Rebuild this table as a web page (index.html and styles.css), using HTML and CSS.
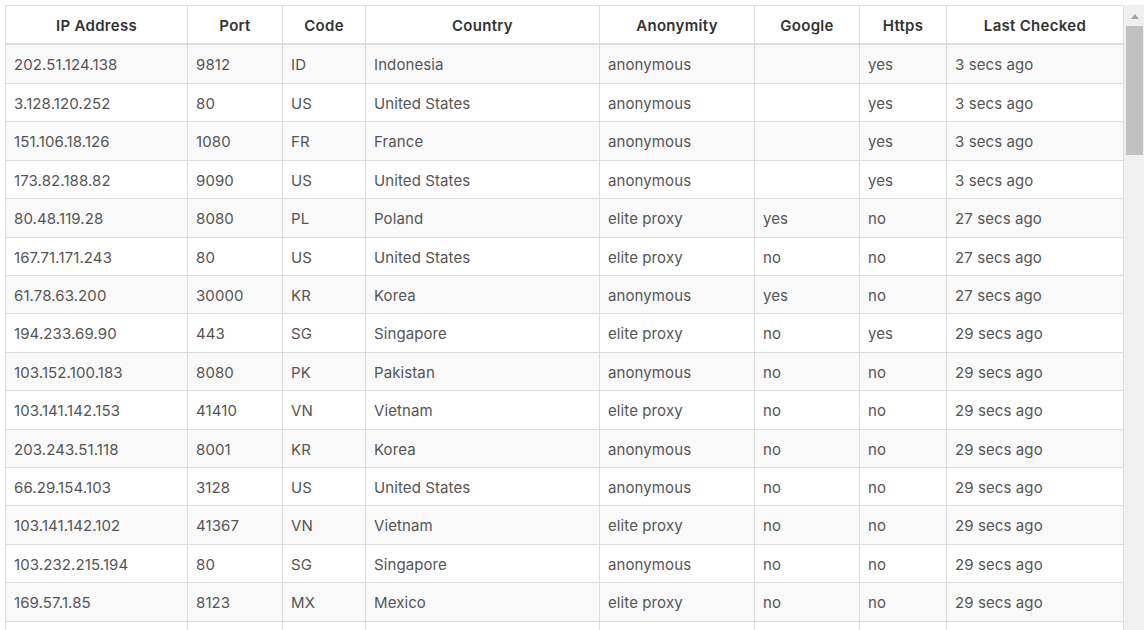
FILE: index.html
```html
<!DOCTYPE html>
<html lang="en">
<head>
<meta charset="utf-8">
<title>Proxy List</title>
<link rel="stylesheet" href="styles.css">
</head>
<body>
<div class="panel">
  <div class="viewport">
    <table class="proxies">
      <colgroup>
        <col class="c-ip"><col class="c-port"><col class="c-code"><col class="c-country">
        <col class="c-anon"><col class="c-google"><col class="c-https"><col class="c-last">
      </colgroup>
      <thead>
        <tr><th>IP Address</th><th>Port</th><th>Code</th><th>Country</th><th>Anonymity</th><th>Google</th><th>Https</th><th>Last Checked</th></tr>
      </thead>
      <tbody>
        <tr><td>202.51.124.138</td><td>9812</td><td>ID</td><td>Indonesia</td><td>anonymous</td><td></td><td>yes</td><td>3 secs ago</td></tr>
        <tr><td>3.128.120.252</td><td>80</td><td>US</td><td>United States</td><td>anonymous</td><td></td><td>yes</td><td>3 secs ago</td></tr>
        <tr><td>151.106.18.126</td><td>1080</td><td>FR</td><td>France</td><td>anonymous</td><td></td><td>yes</td><td>3 secs ago</td></tr>
        <tr><td>173.82.188.82</td><td>9090</td><td>US</td><td>United States</td><td>anonymous</td><td></td><td>yes</td><td>3 secs ago</td></tr>
        <tr><td>80.48.119.28</td><td>8080</td><td>PL</td><td>Poland</td><td>elite proxy</td><td>yes</td><td>no</td><td>27 secs ago</td></tr>
        <tr><td>167.71.171.243</td><td>80</td><td>US</td><td>United States</td><td>elite proxy</td><td>no</td><td>no</td><td>27 secs ago</td></tr>
        <tr><td>61.78.63.200</td><td>30000</td><td>KR</td><td>Korea</td><td>anonymous</td><td>yes</td><td>no</td><td>27 secs ago</td></tr>
        <tr><td>194.233.69.90</td><td>443</td><td>SG</td><td>Singapore</td><td>elite proxy</td><td>no</td><td>yes</td><td>29 secs ago</td></tr>
        <tr><td>103.152.100.183</td><td>8080</td><td>PK</td><td>Pakistan</td><td>anonymous</td><td>no</td><td>no</td><td>29 secs ago</td></tr>
        <tr><td>103.141.142.153</td><td>41410</td><td>VN</td><td>Vietnam</td><td>elite proxy</td><td>no</td><td>no</td><td>29 secs ago</td></tr>
        <tr><td>203.243.51.118</td><td>8001</td><td>KR</td><td>Korea</td><td>anonymous</td><td>no</td><td>no</td><td>29 secs ago</td></tr>
        <tr><td>66.29.154.103</td><td>3128</td><td>US</td><td>United States</td><td>anonymous</td><td>no</td><td>no</td><td>29 secs ago</td></tr>
        <tr><td>103.141.142.102</td><td>41367</td><td>VN</td><td>Vietnam</td><td>elite proxy</td><td>no</td><td>no</td><td>29 secs ago</td></tr>
        <tr><td>103.232.215.194</td><td>80</td><td>SG</td><td>Singapore</td><td>anonymous</td><td>no</td><td>no</td><td>29 secs ago</td></tr>
        <tr><td>169.57.1.85</td><td>8123</td><td>MX</td><td>Mexico</td><td>elite proxy</td><td>no</td><td>no</td><td>29 secs ago</td></tr>
        <tr class="next"><td></td><td></td><td></td><td></td><td></td><td></td><td></td><td></td></tr>
      </tbody>
    </table>
  </div>
  <div class="scrollbar">
    <div class="arrow"></div>
    <div class="thumb"></div>
  </div>
</div>
</body>
</html>
```
FILE: styles.css
```css
html, body {
  margin: 0;
  padding: 0;
  background: #fff;
  overflow: hidden;
}
body {
  font-family: "Inter", "Noto Sans", sans-serif;
  font-size: 15px;
  line-height: 1.42857;
  color: #555;
}
.panel {
  display: flex;
  margin: 5px 3px 0 5px;
  height: 625px;
}
.viewport {
  width: 1119px;
  overflow: hidden;
  flex: none;
}
.proxies {
  width: 1119px;
  table-layout: fixed;
  border-collapse: collapse;
  border-spacing: 0;
}
.c-ip { width: 182px; }
.c-port { width: 95px; }
.c-code { width: 83px; }
.c-country { width: 234px; }
.c-anon { width: 155px; }
.c-google { width: 105px; }
.c-https { width: 87px; }
.c-last { width: 177px; }
.proxies th,
.proxies td {
  border: 1px solid #ddd;
  padding: 9px 8px 7px;
  text-align: left;
  vertical-align: top;
  white-space: nowrap;
  overflow: hidden;
}
.proxies td {
  letter-spacing: 0.1px;
}
.proxies th {
  text-align: center;
  font-weight: 600;
  color: #333;
  letter-spacing: 0.3px;
  border-bottom-width: 2px;
  background: #fff;
}
.proxies tbody tr:nth-child(odd) td {
  background: #f9f9f9;
}
.proxies tr.next td {
  height: 21px;
}
.scrollbar {
  width: 20px;
  flex: none;
  background: #f0f0f0;
  display: flex;
  flex-direction: column;
  align-items: flex-end;
}
.arrow {
  align-self: center;
  margin-top: 9px;
  margin-left: 1px;
  width: 0;
  height: 0;
  border-left: 4.5px solid transparent;
  border-right: 4.5px solid transparent;
  border-bottom: 5px solid #a3a3a3;
}
.thumb {
  margin-top: 7px;
  margin-right: 1px;
  width: 17px;
  height: 129px;
  background: #c1c1c1;
}
```
